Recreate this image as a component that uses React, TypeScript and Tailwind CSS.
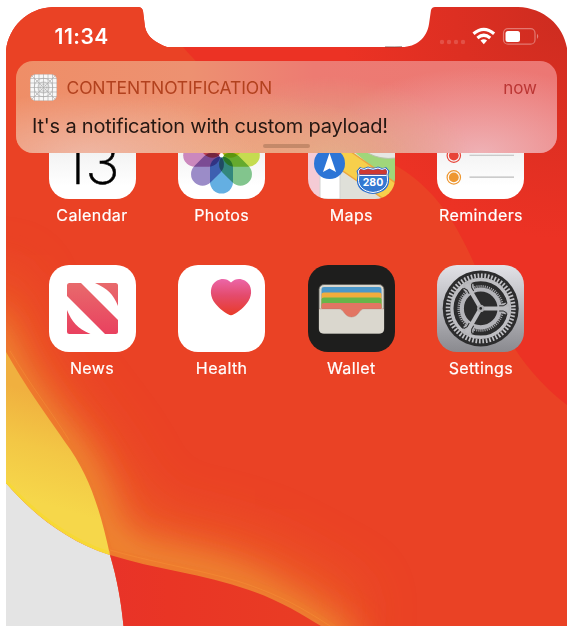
import type { ReactNode } from "react";

const PHONE =
  "M6 626V50C9 27 27 8 53 7H138Q142 7 143 11L145 27C147 37 156 43 167 47H402C416 47 427 38 429 24L431 10Q432 7 435 7H518C544 8 563 25 567 48V626Z";

function Wallpaper() {
  return (
    <svg className="absolute inset-0" width="567" height="626" viewBox="0 0 567 626">
      <defs>
        <clipPath id="phone">
          <path d={PHONE} />
        </clipPath>
        <radialGradient id="corner" gradientUnits="userSpaceOnUse" cx="570" cy="10" r="230">
          <stop offset="0" stopColor="#cc2c20" />
          <stop offset="0.5" stopColor="#dd2f22" />
          <stop offset="1" stopColor="#ec3224" />
        </radialGradient>
        <linearGradient id="yellow" gradientUnits="userSpaceOnUse" x1="60" y1="400" x2="30" y2="500">
          <stop offset="0" stopColor="#f0b03f" />
          <stop offset="0.5" stopColor="#f3c745" />
          <stop offset="1" stopColor="#f6d74a" />
        </linearGradient>
        <linearGradient id="under" gradientUnits="userSpaceOnUse" x1="112" y1="0" x2="300" y2="0">
          <stop offset="0" stopColor="#e83328" />
          <stop offset="0.3" stopColor="#e93525" />
          <stop offset="1" stopColor="#e93c24" />
        </linearGradient>
        <filter id="soft" x="-30%" y="-30%" width="160%" height="160%">
          <feGaussianBlur stdDeviation="18" />
        </filter>
        <filter id="wide" x="-50%" y="-50%" width="200%" height="200%">
          <feGaussianBlur stdDeviation="30" />
        </filter>
        <clipPath id="orangeArea">
          <path d="M6 47H183C205 72 230 95 270 115C310 133 365 148 400 168C436 190 459 226 478 273C497 323 520 369 567 405V626H6ZM0 0H183V47H0Z" />
        </clipPath>
      </defs>
      <g clipPath="url(#phone)">
        <rect width="567" height="626" fill="url(#corner)" />
        <g clipPath="url(#orangeArea)">
          <rect width="567" height="626" fill="#ea4225" />
          <path d="M-15 280C5 370 50 420 80 458C100 485 109 510 125 540C165 552 220 558 259 576L350 625" fill="none" stroke="#ef7a2c" strokeWidth="55" opacity=".55" filter="url(#wide)" />
          <path d="M-15 320C-5 370 40 425 66 450C90 485 99 520 112 552C155 564 210 572 249 590L350 650" fill="none" stroke="#f0a038" strokeWidth="30" opacity=".9" filter="url(#soft)" />
          <path d="M6 351C23 381 43 408 62 436C85 467 96 500 109 552C145 561 192 569 232 578C275 589 299 603 334 628" fill="none" stroke="#ed792c" strokeWidth="7" opacity=".5" />
          <path d="M10 351C31 386 53 414 69 440M110 550C158 564 214 572 252 586C280 596 303 608 330 626" fill="none" stroke="#f58c35" strokeWidth="1" opacity=".6" />
        </g>
        <path d="M6 483C30 511 65 541 110 555C117 579 121 600 123.500 626H6Z" fill="#e4e4e4" />
        <path d="M110 555C154 569 204 574 249 590C279 600 301 614 321 626H123.500C121 600 117 579 110 555Z" fill="url(#under)" />
        <path d="M6 352C24 384 45 413 65 442C89 474 100 509 110 555C65 541 30 511 6 483Z" fill="url(#yellow)" />
        <path d="M6 481C31 510 67 539 109 553" fill="none" stroke="#f7d935" strokeWidth="3" />
      </g>
      <path d="M385 46.800Q396 47 402 46.600" fill="none" stroke="#4b241e" strokeWidth=".5" />
    </svg>
  );
}

function StatusBar() {
  return (
    <header className="relative flex h-[60px] items-start justify-between pl-[54.500px] pr-[27px] pt-[24px] text-white">
      <time className="text-[21px] font-semibold leading-[26px] tracking-[0.5px]">11:34</time>
      <svg width="101" height="26" viewBox="0 0 101 26">
        <g fill="#fff" opacity=".16">
          <circle cx="3" cy="18" r="2.200" />
          <circle cx="10" cy="18" r="2.200" />
          <circle cx="17" cy="18" r="2.200" />
          <circle cx="24" cy="18" r="2.200" />
        </g>
        <g fill="none" stroke="#fff" strokeWidth="3.200">
          <path d="M34.500 9.800Q44.800 .9 55.100 9.800" />
          <path d="M38.400 13.900Q44.800 8.600 51.200 13.900" />
        </g>
        <path d="M41.500 16.500Q44.800 13.800 48.100 16.500L44.800 20.300Z" fill="#fff" />
        <rect x="64.500" y="4.700" width="31.500" height="15.500" rx="4.500" fill="none" stroke="#fff" strokeOpacity=".36" strokeWidth="1.200" />
        <rect x="66.500" y="7" width="14.500" height="11" rx="2.500" fill="#fff" />
        <path d="M98 9.800Q100.500 12.300 98 15Z" fill="#fff" opacity=".4" />
      </svg>
    </header>
  );
}

function Banner() {
  return (
    <section className="absolute left-[16px] top-[60.5px] h-[92.500px] w-[541px] overflow-hidden rounded-[17px] bg-[linear-gradient(90deg,#ef8e67_0%,#ed9171_32%,#ed7b72_55%,#ec7774_100%)]">
      <div className="absolute inset-0 bg-[radial-gradient(170px_65px_at_72px_96px,rgba(239,185,167,.95),transparent),radial-gradient(190px_70px_at_205px_100px,rgba(237,172,131,.9),transparent),radial-gradient(140px_80px_at_315px_96px,rgba(224,174,141,.95),transparent),radial-gradient(165px_85px_at_465px_92px,rgba(239,178,182,.98),transparent)]" />
      <div className="relative flex h-full flex-col px-[14px] pt-[13px]">
        <div className="flex h-[28px] items-center">
          <svg width="27" height="27" viewBox="0 0 27 27">
            <rect x=".4" y=".4" width="26.200" height="26.200" rx="5.500" fill="#f7f7f7" stroke="#ccc" strokeWidth=".5" />
            <g fill="none" stroke="#a6a6a6" strokeWidth=".6">
              <path d="M4.500 0V27M9 0V27M13.500 0V27M18 0V27M22.500 0V27M0 4.500H27M0 9H27M0 13.500H27M0 18H27M0 22.500H27M1 1L26 26M26 1L1 26" />
              <circle cx="13.500" cy="13.500" r="9.300" />
              <circle cx="13.500" cy="13.500" r="5.500" />
              <circle cx="13.500" cy="13.500" r="3" />
            </g>
          </svg>
          <span className="ml-[9.500px] mt-px text-[17.500px] leading-[24px] tracking-[-0.15px] text-[#b2411e]">CONTENTNOTIFICATION</span>
          <span className="ml-auto mr-[6px] mt-px text-[17px] leading-[24px] text-[#bb3634]">now</span>
        </div>
        <p className="ml-[2px] mt-[10px] whitespace-nowrap text-[20px] leading-[28px] tracking-[-0.2px] text-[#251712]">It's a notification with custom payload!</p>
      </div>
      <div className="absolute left-[247px] top-[83px] h-[4px] w-[47px] rounded-full bg-[#c48969]" />
    </section>
  );
}

function CalendarIcon() {
  return (
    <>
      <rect width="87" height="87" fill="url(#paper)" />
      <text x="42.500" y="71.500" textAnchor="middle" fontSize="58" className="font-extralight" stroke="#000" strokeWidth=".5">13</text>
    </>
  );
}

const PETALS = ["#f9bd5c", "#f0e04e", "#c5dc50", "#82c58d", "#64afe2", "#9b8cc8", "#cb88bd", "#f27c6c"];

function PhotosIcon() {
  return (
    <>
      <rect width="87" height="87" fill="url(#paper)" />
      <g className="isolate">
        {PETALS.map((color, i) => (
          <rect key={color} x="32" y="4.900" width="23" height="37" rx="11.500" fill={color} className="mix-blend-multiply" transform={`rotate(${i * 45} 43.5 43.2)`} />
        ))}
      </g>
      <circle cx="43.500" cy="43.200" r="2.200" fill="#fff" />
    </>
  );
}

function MapsIcon() {
  return (
    <>
      <rect width="87" height="87" fill="#dfe0d9" />
      <path d="M0 0H12V87H0Z" fill="#f4cbd5" />
      <path d="M12 45H32V87H12Z" fill="#fff" stroke="#d2d2d0" strokeWidth="1" />
      <path d="M35 30H87V75Z" fill="#a0d67a" />
      <path d="M60 41Q72 48 88 46V30H50Z" fill="#e6e7e3" stroke="#b9c4ac" strokeWidth="1" />
      <path d="M26 28L89 72V96L23 51Z" fill="#f7cf4b" stroke="#eca63d" strokeWidth="1.500" />
      <circle cx="21.500" cy="51.500" r="15.500" fill="#2c75d6" />
      <path d="M21.500 41L28 60L21.500 56.500L15 60Z" fill="#fff" />
      <path d="M52 55Q56 57 60 54.500Q65 57 70 54.500Q74 57 78 55L81.500 59Q80 62 81 67C82 75 76 81 65 82C54 81 48 75 49 67Q50 62 48.500 59Z" fill="#2b70cf" />
      <path d="M52.500 56.500Q56 58.500 60 56Q65 58.500 70 56Q74 58.500 77.500 56.500L79.700 59Q78.500 62 79.500 67C80 74 75 79.500 65 80.500C55 79.500 50 74 50.500 67Q51.500 62 50.300 59Z" fill="#3378d1" stroke="#fff" strokeWidth="1" />
      <path d="M52.500 57Q56 59 60 57Q65 59 70 57Q74 59 77.500 57L79 59.500Q78.500 61 78.500 62.500H51.500Q51.500 61 51 59.500Z" fill="#ce3932" />
      <path d="M51.500 63.500H78.500" stroke="#fff" strokeWidth="1" />
      <text x="65" y="73.700" textAnchor="middle" fontSize="10.500" className="fill-white font-bold">280</text>
    </>
  );
}

function RemindersIcon() {
  return (
    <>
      <rect width="87" height="87" fill="url(#paper)" />
      {[["#3f83ea", 21.8], ["#e84438", 43.6], ["#ee9730", 65.4]].map(([color, y]) => (
        <g key={color}>
          <circle cx="16.800" cy={y} r="6.700" fill="none" stroke={String(color)} strokeWidth="1.200" />
          <circle cx="16.800" cy={y} r="4.900" fill={String(color)} />
          <path d={`M32.500 ${Number(y) - 0.3}H77`} stroke="#bcbcbc" strokeWidth="1.100" />
        </g>
      ))}
    </>
  );
}

function NewsIcon() {
  return (
    <>
      <rect width="87" height="87" fill="#fff" />
      <g fill="url(#news)">
        <path d="M20.500 18H32L69 55V66.500Q69 69 66.500 69H56L18 31V20.500Q18 18 20.500 18Z" />
        <path d="M46 18H66.500Q69 18 69 20.500V41C64 29 59 24 46 18Z" />
        <path d="M18 45C23 57 28 63 41.500 69H20.500Q18 69 18 66.500Z" />
      </g>
    </>
  );
}

function HealthIcon() {
  return (
    <>
      <rect width="87" height="87" fill="#fff" />
      <path d="M53 17.500C47 11.500 38.500 14 34.500 20C31 27 33.500 35 39 40.500C43 45 50 50 53 50.300C56 50 63 45 67 40.500C72.500 35 75 27 71.500 20C67.500 14 59 11.500 53 17.500Z" fill="url(#heart)" />
    </>
  );
}

function WalletIcon() {
  return (
    <>
      <rect width="87" height="87" fill="#1e1e1d" />
      <rect x="11" y="19.500" width="65" height="49" rx="5" fill="#dad7ce" stroke="#5b5a56" strokeWidth=".8" />
      <path d="M13.500 43V24Q13.500 22 16 22H71Q73.500 22 73.500 24V43Z" fill="#4b97c9" />
      <path d="M13.500 43V29.500Q13.500 27.500 16 27.500H71Q73.500 27.500 73.500 29.500V43Z" fill="#f2ac3c" />
      <path d="M13.500 43V34.500Q13.500 32.500 16 32.500H71Q73.500 32.500 73.500 34.500V43Z" fill="#68b549" />
      <path d="M13.500 44V40Q13.500 38 16 38H71Q73.500 38 73.500 40V44H56C51 44 51 52 43.500 52S36 44 31 44Z" fill="#e27563" />
      <path d="M11 44H31C36 44 36 52 43.500 52S51 44 56 44H76V64Q76 68.500 71 68.500H16Q11 68.500 11 64Z" fill="#dad7ce" />
      <path d="M11 43.800H31C36 44 36 52 43.500 52S51 44 56 43.800H76" fill="none" stroke="#b87468" strokeWidth=".7" opacity=".6" />
    </>
  );
}

function SettingsIcon() {
  return (
    <>
      <rect width="87" height="87" fill="url(#steel)" />
      <g transform="translate(43.7 43.4)" fill="none">
        <circle r="38" fill="#2c2c2d" />
        <circle r="32.700" stroke="#c1c1c5" strokeWidth="4.600" strokeDasharray="1.712 1.712" />
        <circle r="28.900" stroke="#bebec2" strokeWidth="3.400" />
        <circle r="22" stroke="#aaaaae" strokeWidth="2.600" strokeDasharray="1.050 1.050" />
        <circle r="18.900" stroke="#b4b4b9" strokeWidth="4.200" />
        {[0, 120, 240].map((angle) => (
          <g key={angle} transform={`rotate(${angle})`}>
            <path d="M25 -6Q30 -4 30 -2V2Q30 4 25 6L20 4V-4Z" fill="#b6b6ba" />
            <path d="M3 0H28" stroke="#bcbcc0" strokeWidth="4" />
            <path d="M25.300 -7.200L25.700 -4.300L22.500 -2.600H18.500" stroke="#2c2c2d" strokeWidth="1" />
            <path d="M25.300 7.200L25.700 4.300L22.500 2.600H18.500" stroke="#2c2c2d" strokeWidth="1" />
          </g>
        ))}
        <circle r="3.600" fill="#aaaaad" />
        <circle r="1.300" fill="#242426" />
      </g>
    </>
  );
}

function AppIcon({ label, children }: { label: string; children: ReactNode }) {
  return (
    <div className="flex w-[87px] flex-col items-center">
      <svg className="rounded-[20px]" width="87" height="87" viewBox="0 0 87 87">{children}</svg>
      <span className="mt-[4px] mb-px whitespace-nowrap text-[16px] leading-[24px] tracking-[0.4px] text-white [-webkit-text-stroke:0.2px_white]">{label}</span>
    </div>
  );
}

function Gradients() {
  return (
    <svg className="absolute" width="0" height="0">
      <defs>
        <linearGradient id="paper" x1="0" y1="0" x2="0" y2="1">
          <stop offset=".3" stopColor="#eeeeee" />
          <stop offset=".85" stopColor="#fff" />
        </linearGradient>
        <linearGradient id="news" gradientUnits="userSpaceOnUse" x1="0" y1="18" x2="0" y2="69">
          <stop stopColor="#e86a6c" />
          <stop offset="1" stopColor="#e9415f" />
        </linearGradient>
        <linearGradient id="heart" x1="0" y1="0" x2="0" y2="1">
          <stop stopColor="#ec66a8" />
          <stop offset=".45" stopColor="#e44b6d" />
          <stop offset="1" stopColor="#e93b28" />
        </linearGradient>
        <linearGradient id="steel" x1="0" y1="0" x2="0" y2="1">
          <stop stopColor="#e2e2e7" />
          <stop offset="1" stopColor="#8a8a8f" />
        </linearGradient>
      </defs>
    </svg>
  );
}

export default function App() {
  return (
    <main className="relative h-[626px] w-[567px] overflow-hidden bg-white font-['Inter','Liberation_Sans',sans-serif]">
      <Gradients />
      <Wallpaper />
      <StatusBar />
      <div className="relative ml-[48.500px] mt-[52px] grid w-[476px] grid-cols-4 justify-between gap-x-[42.600px] gap-y-[37px]">
        <AppIcon label="Calendar"><CalendarIcon /></AppIcon>
        <AppIcon label="Photos"><PhotosIcon /></AppIcon>
        <AppIcon label="Maps"><MapsIcon /></AppIcon>
        <AppIcon label="Reminders"><RemindersIcon /></AppIcon>
        <AppIcon label="News"><NewsIcon /></AppIcon>
        <AppIcon label="Health"><HealthIcon /></AppIcon>
        <AppIcon label="Wallet"><WalletIcon /></AppIcon>
        <AppIcon label="Settings"><SettingsIcon /></AppIcon>
      </div>
      <Banner />
    </main>
  );
}
